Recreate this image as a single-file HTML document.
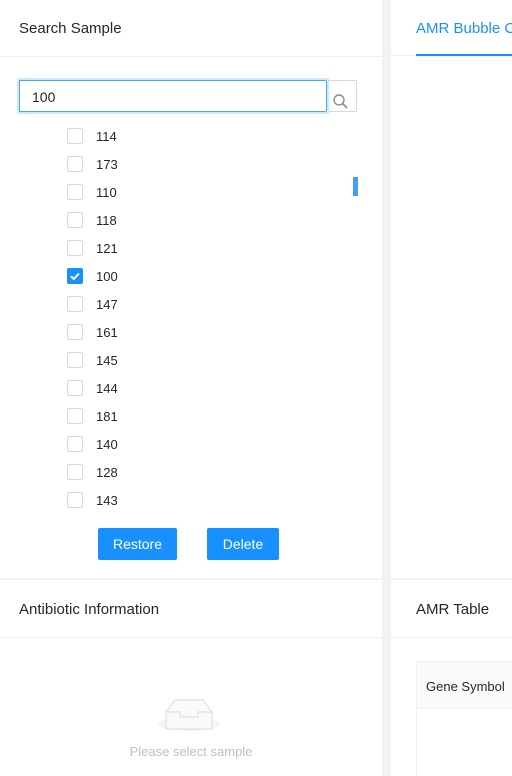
<!DOCTYPE html>
<html><head><style>
*{box-sizing:border-box;margin:0;padding:0}
body{width:512px;height:776px;overflow:hidden;background:#f2f2f2;font-family:"Liberation Sans",sans-serif;position:relative;color:#262626}
.card{position:absolute;background:#fff}
.h{position:absolute;font-size:15px;color:#262626;white-space:nowrap}
.line{position:absolute;height:1px;background:#f0f0f0}
.cb{position:absolute;left:67px;width:16px;height:16px;border:1px solid #d9d9d9;border-radius:2px;background:#fff}
.lbl{position:absolute;left:96px;font-size:13px;color:#262626}
.btn{position:absolute;top:528px;height:32px;background:#1890ff;color:#fff;font-size:14px;text-align:center;line-height:32px;border-radius:2px}
</style></head><body>
<div class="card" style="left:0;top:0;width:382px;height:578px"></div>
<div class="card" style="left:391px;top:0;width:121px;height:578px"></div>
<div class="card" style="left:0;top:580px;width:382px;height:196px"></div>
<div class="card" style="left:391px;top:580px;width:121px;height:196px"></div>

<div class="h" style="left:19px;top:20px">Search Sample</div>
<div class="line" style="left:0;top:56px;width:382px"></div>
<div style="position:absolute;left:19px;top:80px;width:308px;height:32px;border:1px solid #40a9ff;box-shadow:0 0 0 2px rgba(24,144,255,.2);font-size:14px;padding:8px 0 0 12px">100</div>
<div style="position:absolute;left:326px;top:80px;width:31px;height:32px;border:1px solid #d9d9d9;border-left:none">
<svg width="31" height="32" viewBox="0 0 31 32"><circle cx="13" cy="19" r="5" fill="none" stroke="#8c8c8c" stroke-width="1.4"/><line x1="16.5" y1="22.5" x2="21" y2="27" stroke="#8c8c8c" stroke-width="1.6"/></svg></div>

<div class="cb" style="top:128px"></div><div class="lbl" style="top:129px">114</div>
<div class="cb" style="top:156px"></div><div class="lbl" style="top:157px">173</div>
<div class="cb" style="top:184px"></div><div class="lbl" style="top:185px">110</div>
<div class="cb" style="top:212px"></div><div class="lbl" style="top:213px">118</div>
<div class="cb" style="top:240px"></div><div class="lbl" style="top:241px">121</div>
<div class="cb" style="top:268px;background:#1890ff;border-color:#1890ff"><svg width="14" height="14" viewBox="0 0 14 14" style="position:absolute;left:0;top:0"><path d="M3 7.2l2.8 2.8L11 4.5" fill="none" stroke="#fff" stroke-width="2"/></svg></div><div class="lbl" style="top:269px">100</div>
<div class="cb" style="top:296px"></div><div class="lbl" style="top:297px">147</div>
<div class="cb" style="top:324px"></div><div class="lbl" style="top:325px">161</div>
<div class="cb" style="top:352px"></div><div class="lbl" style="top:353px">145</div>
<div class="cb" style="top:380px"></div><div class="lbl" style="top:381px">144</div>
<div class="cb" style="top:408px"></div><div class="lbl" style="top:409px">181</div>
<div class="cb" style="top:436px"></div><div class="lbl" style="top:437px">140</div>
<div class="cb" style="top:464px"></div><div class="lbl" style="top:465px">128</div>
<div class="cb" style="top:492px"></div><div class="lbl" style="top:493px">143</div>
<div style="position:absolute;left:353px;top:177px;width:5px;height:19px;background:#40a0f8"></div>

<div class="btn" style="left:98px;width:79px">Restore</div>
<div class="btn" style="left:207px;width:72px">Delete</div>

<div style="position:absolute;left:416px;top:0;width:96px;height:56px;overflow:hidden">
<div class="h" style="left:0;top:20px;color:#1890ff">AMR Bubble Chart</div>
<div style="position:absolute;left:0;top:54px;width:96px;height:2px;background:#1890ff"></div>
</div>
<div class="line" style="left:391px;top:55px;width:25px"></div>

<div class="h" style="left:19px;top:601px">Antibiotic Information</div>
<div class="line" style="left:0;top:637px;width:382px"></div>
<svg style="position:absolute;left:156px;top:692px" width="66" height="44" viewBox="0 0 66 44">
<ellipse cx="33" cy="32" rx="31" ry="7" fill="#f5f5f5"/>
<path d="M10 20 L19 8 H47 L56 20 V37 H10 Z" fill="#fafafa" stroke="#d9d9d9"/>
<path d="M10 20 H24 V25 H42 V20 H56" fill="none" stroke="#d9d9d9"/>
</svg>
<div style="position:absolute;left:0;width:382px;top:744px;text-align:center;font-size:13px;color:#bfbfbf">Please select sample</div>

<div class="h" style="left:416px;top:601px">AMR Table</div>
<div class="line" style="left:391px;top:637px;width:121px"></div>
<div style="position:absolute;left:416px;top:661px;width:96px;height:115px;border-left:1px solid #f0f0f0"></div>
<div style="position:absolute;left:416px;top:661px;width:96px;height:48px;background:#fafafa;border:1px solid #f0f0f0;border-right:none;font-size:13px;padding:17px 0 0 9px;white-space:nowrap;overflow:hidden">Gene Symbol</div>
</body></html>
